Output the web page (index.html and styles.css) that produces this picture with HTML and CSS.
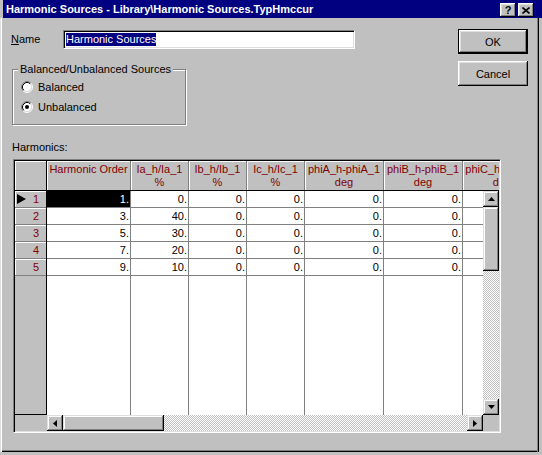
FILE: index.html
```html
<!DOCTYPE html>
<html>
<head>
<meta charset="utf-8">
<link rel="stylesheet" href="styles.css">
</head>
<body>
<div class="titlebar">
  <span class="title">Harmonic Sources - Library\Harmonic Sources.TypHmccur</span>
  <div class="capbtns">
    <span class="capbtn">?</span>
    <span class="capbtn"><svg width="8" height="7" viewBox="0 0 8 7"><path d="M0.5 0.5 L7.5 6.5 M7.5 0.5 L0.5 6.5" stroke="#000" stroke-width="1.6" fill="none"/></svg></span>
  </div>
</div>
<div class="client">
  <div class="top">
    <div class="left">
      <div class="namerow">
        <span class="lbl"><u>N</u>ame</span>
        <div class="input"><span class="sel">Harmonic Sources</span></div>
      </div>
      <div class="group">
        <div class="legend">Balanced/Unbalanced Sources</div>
        <div class="radio">
          <svg width="12" height="12" viewBox="0 0 12 12"><circle cx="6" cy="6" r="4.5" fill="#fff"/><path d="M2.11 9.89 A5.5 5.5 0 0 1 9.89 2.11" stroke="#808080" fill="none"/><path d="M9.89 2.11 A5.5 5.5 0 0 1 2.11 9.89" stroke="#fff" fill="none"/><path d="M2.82 9.18 A4.5 4.5 0 0 1 9.18 2.82" stroke="#000" fill="none"/><path d="M9.18 2.82 A4.5 4.5 0 0 1 2.82 9.18" stroke="#dfdfdf" fill="none"/></svg>
          <span>Balanced</span>
        </div>
        <div class="radio">
          <svg width="12" height="12" viewBox="0 0 12 12"><circle cx="6" cy="6" r="4.5" fill="#fff"/><path d="M2.11 9.89 A5.5 5.5 0 0 1 9.89 2.11" stroke="#808080" fill="none"/><path d="M9.89 2.11 A5.5 5.5 0 0 1 2.11 9.89" stroke="#fff" fill="none"/><path d="M2.82 9.18 A4.5 4.5 0 0 1 9.18 2.82" stroke="#000" fill="none"/><path d="M9.18 2.82 A4.5 4.5 0 0 1 2.82 9.18" stroke="#dfdfdf" fill="none"/><circle cx="6" cy="6" r="2" fill="#000"/></svg>
          <span>Unbalanced</span>
        </div>
      </div>
    </div>
    <div class="buttons">
      <div class="btn default">OK</div>
      <div class="btn">Cancel</div>
    </div>
  </div>
  <div class="hlabel">Harmonics:</div>
  <div class="grid">
    <div class="corner"></div>
    <div class="hdr">
      <div class="hcell w84">Harmonic Order</div>
      <div class="hcell w58">Ia_h/Ia_1<br>%</div>
      <div class="hcell w58">Ib_h/Ib_1<br>%</div>
      <div class="hcell w58">Ic_h/Ic_1<br>%</div>
      <div class="hcell w79">phiA_h-phiA_1<br>deg</div>
      <div class="hcell w79">phiB_h-phiB_1<br>deg</div>
      <div class="hcell w79">phiC_h-phiC_1<br>deg</div>
    </div>
    <div class="rowhdr">
      <div class="rcell"><svg width="9" height="10" viewBox="0 0 9 10"><polygon points="0,0 9,5 0,10" fill="#000"/></svg><span>1</span></div>
      <div class="rcell"><span></span><span>2</span></div>
      <div class="rcell"><span></span><span>3</span></div>
      <div class="rcell"><span></span><span>4</span></div>
      <div class="rcell"><span></span><span>5</span></div>
    </div>
    <div class="data">
      <div class="col w84">
        <div class="cell cur">1.</div><div class="cell">3.</div><div class="cell">5.</div><div class="cell">7.</div><div class="cell">9.</div>
      </div>
      <div class="col w58">
        <div class="cell">0.</div><div class="cell">40.</div><div class="cell">30.</div><div class="cell">20.</div><div class="cell">10.</div>
      </div>
      <div class="col w58">
        <div class="cell">0.</div><div class="cell">0.</div><div class="cell">0.</div><div class="cell">0.</div><div class="cell">0.</div>
      </div>
      <div class="col w58">
        <div class="cell">0.</div><div class="cell">0.</div><div class="cell">0.</div><div class="cell">0.</div><div class="cell">0.</div>
      </div>
      <div class="col w79">
        <div class="cell">0.</div><div class="cell">0.</div><div class="cell">0.</div><div class="cell">0.</div><div class="cell">0.</div>
      </div>
      <div class="col w79">
        <div class="cell">0.</div><div class="cell">0.</div><div class="cell">0.</div><div class="cell">0.</div><div class="cell">0.</div>
      </div>
      <div class="col w79">
        <div class="cell">0.</div><div class="cell">0.</div><div class="cell">0.</div><div class="cell">0.</div><div class="cell">0.</div>
      </div>
    </div>
    <div class="vscroll">
      <div class="sbtn"><svg width="7" height="4" viewBox="0 0 7 4"><polygon points="3.5,0 7,4 0,4" fill="#000"/></svg></div>
      <div class="thumb vthumb"></div>
      <div class="track"></div>
      <div class="sbtn"><svg width="7" height="4" viewBox="0 0 7 4"><polygon points="0,0 7,0 3.5,4" fill="#000"/></svg></div>
    </div>
    <div class="corner2"></div>
    <div class="hscroll">
      <div class="sbtn"><svg width="4" height="7" viewBox="0 0 4 7"><polygon points="4,0 4,7 0,3.5" fill="#000"/></svg></div>
      <div class="thumb hthumb"></div>
      <div class="track"></div>
      <div class="sbtn"><svg width="4" height="7" viewBox="0 0 4 7"><polygon points="0,0 4,3.5 0,7" fill="#000"/></svg></div>
    </div>
    <div class="corner3"></div>
  </div>
</div>
</body>
</html>
```
FILE: styles.css
```css
body {
  margin: 0;
  width: 542px;
  height: 455px;
  overflow: hidden;
  background: #c0c0c0;
  font-family: "Liberation Sans", Arial, sans-serif;
  font-size: 11px;
  color: #000;
}
.titlebar {
  height: 18px;
  margin-left: 3px;
  padding-left: 3px;
  background: #000080;
  color: #fff;
  display: flex;
  align-items: center;
  font-weight: bold;
}
.title {
  flex: 1;
  white-space: nowrap;
  line-height: 18px;
}
.capbtns {
  display: flex;
  gap: 2px;
  margin-right: 8px;
  margin-top: 2px;
}
.capbtn {
  width: 16px;
  height: 14px;
  box-sizing: border-box;
  background: #c0c0c0;
  box-shadow: inset -1px -1px #000, inset 1px 1px #fff, inset -2px -2px #808080, inset 2px 2px #dfdfdf;
  color: #000;
  display: flex;
  align-items: center;
  justify-content: center;
  font-weight: bold;
  font-size: 11px;
  line-height: 12px;
}
.client {
  width: 539px;
  height: 434px;
  box-sizing: border-box;
  overflow: hidden;
  box-shadow: inset 1px 0 #dfdfdf, inset 2px 0 #fff, inset -1px 0 #000, inset -2px 0 #808080, inset 0 -1px #000, inset 0 -2px #808080;
}
.top {
  display: flex;
}
.left {
  margin: 12px 0 0 11px;
}
.namerow {
  display: flex;
  align-items: center;
  height: 19px;
}
.lbl {
  width: 52px;
  line-height: 13px;
}
.input {
  box-sizing: border-box;
  width: 292px;
  height: 19px;
  background: #fff;
  border: 1px solid;
  border-color: #808080 #fff #fff #808080;
  box-shadow: inset 1px 1px #000, inset -1px -1px #dfdfdf;
  padding: 2px 0 0 2px;
  line-height: 13px;
}
.sel {
  display: inline-block;
  background: #000080;
  color: #fff;
  line-height: 13px;
}
.group {
  margin: 20px 0 0 1px;
  width: 174px;
  height: 56px;
  box-sizing: border-box;
  border: 1px solid #808080;
  box-shadow: inset 1px 1px #fff, 1px 1px #fff;
}
.legend {
  margin: -7px 0 0 5px;
  padding: 0 2px;
  width: fit-content;
  background: #c0c0c0;
  line-height: 13px;
}
.radio {
  display: flex;
  align-items: center;
  gap: 5px;
  height: 20px;
  padding-left: 8px;
  line-height: 13px;
}
.radio:first-of-type {
  margin-top: 1px;
}
.group .legend + .radio {
  margin-top: 1px;
}
.radio svg {
  display: block;
}
.buttons {
  margin: 11px 11px 0 auto;
  display: flex;
  flex-direction: column;
  gap: 7px;
}
.btn {
  width: 70px;
  height: 25px;
  box-sizing: border-box;
  display: flex;
  align-items: center;
  justify-content: center;
  box-shadow: inset -1px -1px #000, inset 1px 1px #fff, inset -2px -2px #808080, inset 2px 2px #dfdfdf;
}
.btn.default {
  border: 1px solid #000;
}
.hlabel {
  margin: 16px 0 0 12px;
  line-height: 13px;
}
.grid {
  margin: 5px 0 0 13px;
  width: 488px;
  height: 274px;
  box-sizing: border-box;
  border: 1px solid;
  border-color: #808080 #fff #fff #808080;
  box-shadow: inset 1px 1px #000, inset -1px -1px #dfdfdf;
  padding: 1px;
  display: grid;
  grid-template-columns: 32px 436px 16px;
  grid-template-rows: 30px 224px 16px;
}
.corner {
  box-sizing: border-box;
  border-right: 1px solid #000;
  border-bottom: 1px solid #000;
  box-shadow: inset 1px 1px #fff;
}
.hdr {
  grid-column: 2 / 4;
  display: flex;
  overflow: hidden;
  box-sizing: border-box;
  border-bottom: 1px solid #000;
}
.hcell {
  flex: none;
  box-sizing: border-box;
  height: 29px;
  border-right: 1px solid #808080;
  box-shadow: inset 1px 1px #fff;
  color: #800000;
  text-align: center;
  line-height: 13px;
  padding-top: 2px;
  white-space: nowrap;
  overflow: hidden;
}
.w84 { width: 84px; }
.w58 { width: 58px; }
.w79 { width: 79px; }
.rowhdr {
  box-sizing: border-box;
  border-right: 1px solid #000;
  border-bottom: 1px solid #000;
}
.rcell {
  height: 17px;
  box-sizing: border-box;
  border-bottom: 1px solid #808080;
  box-shadow: inset 1px 1px #fff;
  display: flex;
  align-items: center;
  justify-content: space-between;
  padding: 0 7px 0 2px;
  color: #800000;
  line-height: 16px;
}
.rcell svg {
  display: block;
}
.data {
  background: #fff;
  display: flex;
  overflow: hidden;
}
.col {
  flex: none;
  box-sizing: border-box;
  border-right: 1px solid #808080;
}
.cell {
  height: 17px;
  box-sizing: border-box;
  border-bottom: 1px solid #808080;
  text-align: right;
  padding-right: 1px;
  line-height: 16px;
}
.cell.cur {
  background: #000;
  color: #fff;
}
.vscroll {
  display: flex;
  flex-direction: column;
}
.hscroll {
  display: flex;
}
.sbtn {
  flex: none;
  width: 16px;
  height: 16px;
  box-sizing: border-box;
  background: #c0c0c0;
  box-shadow: inset -1px -1px #000, inset 1px 1px #dfdfdf, inset -2px -2px #808080, inset 2px 2px #fff;
  display: flex;
  align-items: center;
  justify-content: center;
}
.sbtn svg {
  display: block;
}
.thumb {
  flex: none;
  background: #c0c0c0;
  box-shadow: inset -1px -1px #000, inset 1px 1px #dfdfdf, inset -2px -2px #808080, inset 2px 2px #fff;
}
.vthumb {
  width: 16px;
  height: 64px;
}
.hthumb {
  width: 101px;
  height: 16px;
}
.track {
  flex: 1;
  background-color: #c0c0c0;
  background-image: conic-gradient(#fff 25%, #c0c0c0 0 50%, #fff 0 75%, #c0c0c0 0);
  background-size: 2px 2px;
}
.corner2, .corner3 {
  background: #c0c0c0;
}
```
